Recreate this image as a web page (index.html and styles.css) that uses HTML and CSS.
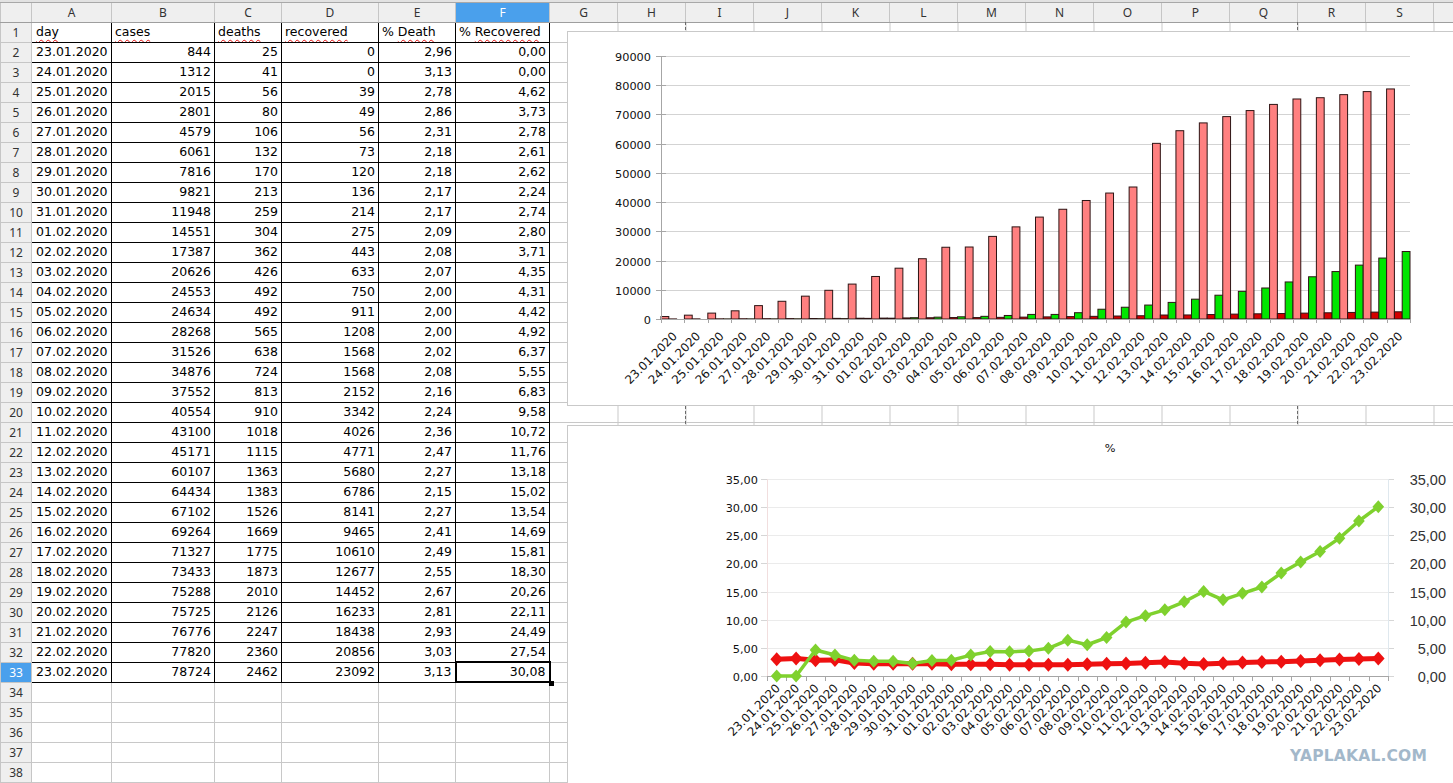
FILE: index.html
```html
<!DOCTYPE html>
<html>
  <head>
    <meta charset="utf-8" />
    <title>covid.ods</title>
    <link rel="stylesheet" href="styles.css">
  </head>
  <body>
    <div class="sheet">
      <div class="topstrip"></div>
      <table class="grid">
        <colgroup>
          <col class="c-rh"><col class="c-a"><col class="c-b"><col class="c-c"><col class="c-d"><col class="c-e"><col class="c-f">
          <col><col><col><col><col><col><col><col><col><col><col><col><col><col>
        </colgroup>
        <thead>
          <tr>
            <th></th><th>A</th><th>B</th><th>C</th><th>D</th><th>E</th><th class="sel">F</th>
            <th>G</th><th>H</th><th>I</th><th>J</th><th>K</th><th>L</th><th>M</th><th>N</th><th>O</th><th>P</th><th>Q</th><th>R</th><th>S</th><th></th>
          </tr>
        </thead>
        <tbody>
          <tr class="rec hd"><th>1</th><td><span class="sp">day</span></td><td><span class="sp">cases</span></td><td><span class="sp">deaths</span></td><td><span class="sp">recovered</span></td><td>% <span class="sp">Death</span></td><td>% <span class="sp">Recovered</span></td><td class="rest" colspan="14"></td></tr>
          <tr class="rec"><th>2</th><td>23.01.2020</td><td>844</td><td>25</td><td>0</td><td>2,96</td><td>0,00</td><td class="rest" colspan="14"></td></tr>
          <tr class="rec"><th>3</th><td>24.01.2020</td><td>1312</td><td>41</td><td>0</td><td>3,13</td><td>0,00</td><td class="rest" colspan="14"></td></tr>
          <tr class="rec"><th>4</th><td>25.01.2020</td><td>2015</td><td>56</td><td>39</td><td>2,78</td><td>4,62</td><td class="rest" colspan="14"></td></tr>
          <tr class="rec"><th>5</th><td>26.01.2020</td><td>2801</td><td>80</td><td>49</td><td>2,86</td><td>3,73</td><td class="rest" colspan="14"></td></tr>
          <tr class="rec"><th>6</th><td>27.01.2020</td><td>4579</td><td>106</td><td>56</td><td>2,31</td><td>2,78</td><td class="rest" colspan="14"></td></tr>
          <tr class="rec"><th>7</th><td>28.01.2020</td><td>6061</td><td>132</td><td>73</td><td>2,18</td><td>2,61</td><td class="rest" colspan="14"></td></tr>
          <tr class="rec"><th>8</th><td>29.01.2020</td><td>7816</td><td>170</td><td>120</td><td>2,18</td><td>2,62</td><td class="rest" colspan="14"></td></tr>
          <tr class="rec"><th>9</th><td>30.01.2020</td><td>9821</td><td>213</td><td>136</td><td>2,17</td><td>2,24</td><td class="rest" colspan="14"></td></tr>
          <tr class="rec"><th>10</th><td>31.01.2020</td><td>11948</td><td>259</td><td>214</td><td>2,17</td><td>2,74</td><td class="rest" colspan="14"></td></tr>
          <tr class="rec"><th>11</th><td>01.02.2020</td><td>14551</td><td>304</td><td>275</td><td>2,09</td><td>2,80</td><td class="rest" colspan="14"></td></tr>
          <tr class="rec"><th>12</th><td>02.02.2020</td><td>17387</td><td>362</td><td>443</td><td>2,08</td><td>3,71</td><td class="rest" colspan="14"></td></tr>
          <tr class="rec"><th>13</th><td>03.02.2020</td><td>20626</td><td>426</td><td>633</td><td>2,07</td><td>4,35</td><td class="rest" colspan="14"></td></tr>
          <tr class="rec"><th>14</th><td>04.02.2020</td><td>24553</td><td>492</td><td>750</td><td>2,00</td><td>4,31</td><td class="rest" colspan="14"></td></tr>
          <tr class="rec"><th>15</th><td>05.02.2020</td><td>24634</td><td>492</td><td>911</td><td>2,00</td><td>4,42</td><td class="rest" colspan="14"></td></tr>
          <tr class="rec"><th>16</th><td>06.02.2020</td><td>28268</td><td>565</td><td>1208</td><td>2,00</td><td>4,92</td><td class="rest" colspan="14"></td></tr>
          <tr class="rec"><th>17</th><td>07.02.2020</td><td>31526</td><td>638</td><td>1568</td><td>2,02</td><td>6,37</td><td class="rest" colspan="14"></td></tr>
          <tr class="rec"><th>18</th><td>08.02.2020</td><td>34876</td><td>724</td><td>1568</td><td>2,08</td><td>5,55</td><td class="rest" colspan="14"></td></tr>
          <tr class="rec"><th>19</th><td>09.02.2020</td><td>37552</td><td>813</td><td>2152</td><td>2,16</td><td>6,83</td><td class="rest" colspan="14"></td></tr>
          <tr class="rec"><th>20</th><td>10.02.2020</td><td>40554</td><td>910</td><td>3342</td><td>2,24</td><td>9,58</td><td class="rest" colspan="14"></td></tr>
          <tr class="rec"><th>21</th><td>11.02.2020</td><td>43100</td><td>1018</td><td>4026</td><td>2,36</td><td>10,72</td><td class="rest" colspan="14"></td></tr>
          <tr class="rec"><th>22</th><td>12.02.2020</td><td>45171</td><td>1115</td><td>4771</td><td>2,47</td><td>11,76</td><td class="rest" colspan="14"></td></tr>
          <tr class="rec"><th>23</th><td>13.02.2020</td><td>60107</td><td>1363</td><td>5680</td><td>2,27</td><td>13,18</td><td class="rest" colspan="14"></td></tr>
          <tr class="rec"><th>24</th><td>14.02.2020</td><td>64434</td><td>1383</td><td>6786</td><td>2,15</td><td>15,02</td><td class="rest" colspan="14"></td></tr>
          <tr class="rec"><th>25</th><td>15.02.2020</td><td>67102</td><td>1526</td><td>8141</td><td>2,27</td><td>13,54</td><td class="rest" colspan="14"></td></tr>
          <tr class="rec"><th>26</th><td>16.02.2020</td><td>69264</td><td>1669</td><td>9465</td><td>2,41</td><td>14,69</td><td class="rest" colspan="14"></td></tr>
          <tr class="rec"><th>27</th><td>17.02.2020</td><td>71327</td><td>1775</td><td>10610</td><td>2,49</td><td>15,81</td><td class="rest" colspan="14"></td></tr>
          <tr class="rec"><th>28</th><td>18.02.2020</td><td>73433</td><td>1873</td><td>12677</td><td>2,55</td><td>18,30</td><td class="rest" colspan="14"></td></tr>
          <tr class="rec"><th>29</th><td>19.02.2020</td><td>75288</td><td>2010</td><td>14452</td><td>2,67</td><td>20,26</td><td class="rest" colspan="14"></td></tr>
          <tr class="rec"><th>30</th><td>20.02.2020</td><td>75725</td><td>2126</td><td>16233</td><td>2,81</td><td>22,11</td><td class="rest" colspan="14"></td></tr>
          <tr class="rec"><th>31</th><td>21.02.2020</td><td>76776</td><td>2247</td><td>18438</td><td>2,93</td><td>24,49</td><td class="rest" colspan="14"></td></tr>
          <tr class="rec"><th>32</th><td>22.02.2020</td><td>77820</td><td>2360</td><td>20856</td><td>3,03</td><td>27,54</td><td class="rest" colspan="14"></td></tr>
          <tr class="rec"><th class="sel">33</th><td>23.02.2020</td><td>78724</td><td>2462</td><td>23092</td><td>3,13</td><td class="cur">30,08</td><td class="rest" colspan="14"></td></tr>
          <tr><th>34</th><td></td><td></td><td></td><td></td><td></td><td></td><td class="rest" colspan="14"></td></tr>
          <tr><th>35</th><td></td><td></td><td></td><td></td><td></td><td></td><td class="rest" colspan="14"></td></tr>
          <tr><th>36</th><td></td><td></td><td></td><td></td><td></td><td></td><td class="rest" colspan="14"></td></tr>
          <tr><th>37</th><td></td><td></td><td></td><td></td><td></td><td></td><td class="rest" colspan="14"></td></tr>
          <tr><th>38</th><td></td><td></td><td></td><td></td><td></td><td></td><td class="rest" colspan="14"></td></tr>
        </tbody>
      </table>

      <!-- разрывы страниц -->
      <div class="pb pb1"></div>
      <div class="pb pb2"></div>

      <div class="chart chart1">
        <svg id="bars" viewBox="568 32 890 373" width="890" height="373"></svg>
      </div>
      <div class="chart chart2">
        <svg id="lines" viewBox="568 426 890 360" width="890" height="360"></svg>
      </div>

      <div class="wm">YAPLAKAL.COM</div>
    </div>

    <script>
      const NS = "http://www.w3.org/2000/svg";
      function add(svg, tag, attrs, text) {
        const e = document.createElementNS(NS, tag);
        for (const k in attrs) e.setAttribute(k, attrs[k]);
        if (text !== undefined) e.textContent = text;
        svg.appendChild(e);
        return e;
      }
      const num = (s) => parseFloat(s.replace(",", "."));
      const px = (v) => Math.round(v) + 0.5;

      // данные берём прямо из таблицы
      const data = [...document.querySelectorAll(".grid tr.rec:not(.hd)")].map((tr) => {
        const c = tr.querySelectorAll("td");
        return {
          day: c[0].textContent,
          cases: num(c[1].textContent),
          deaths: num(c[2].textContent),
          rec: num(c[3].textContent),
          pd: num(c[4].textContent),
          pr: num(c[5].textContent),
        };
      });
      const n = data.length;

      // столбчатая диаграмма
      const bars = document.getElementById("bars");
      (function () {
        const left = 661, right = 1410, base = 319, top = 56;
        const cw = (right - left) / n;
        const k = (base - top) / 90000;
        for (let v = 0; v <= 90000; v += 10000) {
          const y = px(base - v * k);
          if (v) add(bars, "line", { x1: left, x2: right, y1: y, y2: y, class: "grid1" });
          add(bars, "line", { x1: 656, x2: 666, y1: y, y2: y, class: "axis" });
          add(bars, "text", { x: 651, y: y + 4, class: "lbl", "text-anchor": "end" }, v);
        }
        const bw = cw / 3;
        const series = [["cases", "#ff8080"], ["deaths", "#d40000"], ["rec", "#00e600"]];
        data.forEach((d, i) => {
          series.forEach(([key, color], j) => {
            const h = d[key] * k;
            add(bars, "rect", {
              x: left + i * cw + j * bw, y: base - h, width: bw, height: h,
              fill: color, class: "bar",
            });
          });
        });
        add(bars, "line", { x1: px(left), x2: px(left), y1: top, y2: base + 4, class: "axis" });
        add(bars, "line", { x1: left, x2: right, y1: px(base), y2: px(base), class: "axis" });
        for (let i = 0; i <= n; i++) {
          const x = px(left + i * cw);
          add(bars, "line", { x1: x, x2: x, y1: base, y2: base + 4, class: "axis" });
        }
        data.forEach((d, i) => {
          const x = left + (i + 0.5) * cw + 5, y = 337;
          add(bars, "text", { x, y, class: "xl", "text-anchor": "end", transform: `rotate(-45 ${x} ${y})` }, d.day);
        });
      })();

      // линейная диаграмма, %
      const lines = document.getElementById("lines");
      (function () {
        const left = 767, right = 1388, base = 676, top = 479;
        const cw = (right - left) / n;
        const k = (base - top) / 35;
        add(lines, "text", { x: 1110, y: 452, class: "lbl", "text-anchor": "middle" }, "%");
        for (let v = 0; v <= 35; v += 5) {
          const y = px(base - v * k);
          const t = v.toFixed(2).replace(".", ",");
          if (v) add(lines, "line", { x1: left, x2: right, y1: y, y2: y, class: "grid2" });
          add(lines, "line", { x1: left - 6, x2: left, y1: y, y2: y, class: "tick2" });
          add(lines, "line", { x1: right, x2: right + 6, y1: y, y2: y, class: "tick2" });
          add(lines, "text", { x: 758, y: y + 4, class: "lbl", "text-anchor": "end" }, t);
          add(lines, "text", { x: 1446, y: y + 5, class: "rl", "text-anchor": "end" }, t);
        }
        add(lines, "line", { x1: px(left), x2: px(left), y1: top, y2: base, class: "yl" });
        add(lines, "line", { x1: px(right), x2: px(right), y1: top, y2: base, class: "yr" });
        add(lines, "line", { x1: left, x2: right, y1: px(base), y2: px(base), class: "axis" });
        for (let i = 0; i <= n; i++) {
          const x = px(left + i * cw);
          add(lines, "line", { x1: x, x2: x, y1: base, y2: base + 5, class: "axis" });
        }
        const cx = (i) => left + (i + 0.5) * cw;
        const draw = (key, color, width, r) => {
          const pts = data.map((d, i) => cx(i) + "," + (base - d[key] * k)).join(" ");
          add(lines, "polyline", { points: pts, fill: "none", stroke: color, "stroke-width": width, "stroke-linejoin": "round" });
          data.forEach((d, i) => {
            const x = cx(i), y = base - d[key] * k;
            add(lines, "polygon", {
              points: `${x},${y - r} ${x + r * 0.9},${y} ${x},${y + r} ${x - r * 0.9},${y}`,
              fill: color,
            });
          });
        };
        draw("pd", "#ee1111", 5, 7);
        draw("pr", "#7fd12e", 3.5, 6.5);
        data.forEach((d, i) => {
          const x = cx(i) + 4, y = 689;
          add(lines, "text", { x, y, class: "xl", "text-anchor": "end", transform: `rotate(-45 ${x} ${y})` }, d.day);
        });
      })();
    </script>
  </body>
</html>
```

FILE: styles.css
```css
* {
  margin: 0;
  padding: 0;
  box-sizing: border-box;
}
html,
body {
  width: 100%;
  height: 100%;
  overflow: hidden;
  background: #fff;
}
.sheet {
  position: relative;
  width: 1453px;
  height: 783px;
  overflow: hidden;
  font-family: "DejaVu Sans", sans-serif;
}
.topstrip {
  height: 3px;
  background: #e2e2e2;
  border-bottom: 1px solid #a8a8a8;
}

/* таблица */
.grid {
  border-collapse: collapse;
  table-layout: fixed;
  width: 1501px;
}
.grid col {
  width: 68px;
}
.grid col.c-rh {
  width: 31px;
}
.grid col.c-a {
  width: 80px;
}
.grid col.c-b {
  width: 103px;
}
.grid col.c-c {
  width: 67px;
}
.grid col.c-d {
  width: 97px;
}
.grid col.c-e {
  width: 77px;
}
.grid col.c-f {
  width: 94px;
}
.grid th {
  background: #efefef;
  border: 1px solid #c6c6c6;
  font: 12px "Noto Sans", sans-serif;
  color: #333;
  text-align: center;
}
.grid thead th {
  height: 19px;
  line-height: 17px;
  border-top: 0;
  border-bottom-color: #9e9e9e;
}
.grid th.sel {
  background: #4aa0ec;
  color: #fff;
}
.grid tbody tr {
  height: 20px;
}
.grid td {
  border: 1px solid #c8c8c8;
  font-size: 12.5px;
  line-height: 18px;
  padding: 0 4px 0 4px;
  white-space: nowrap;
  overflow: hidden;
  color: #000;
}
.rec td {
  border-color: #000;
}
.rec td:not(:first-of-type) {
  text-align: right;
  padding-right: 3px;
}
.hd td:not(:first-of-type) {
  text-align: left;
  padding-left: 3px;
}
.grid td.rest {
  border-color: #c8c8c8;
  background: repeating-linear-gradient(to right, transparent 0 67px, #c8c8c8 67px 68px);
}
.grid td.cur {
  border: 2px solid #000;
  position: relative;
  overflow: visible;
}
.grid td.cur::after {
  content: "";
  position: absolute;
  right: -5px;
  bottom: -5px;
  width: 5px;
  height: 5px;
  background: #000;
}
.sp {
  text-decoration: underline wavy #e01010;
  text-decoration-thickness: 1px;
  text-underline-offset: 3px;
  text-decoration-skip-ink: none;
}

.pb {
  position: absolute;
  top: 22px;
  bottom: 0;
  width: 0;
  border-left: 1px dashed #6a6a6a;
}
.pb1 {
  left: 685px;
}
.pb2 {
  left: 1297px;
}

/* диаграммы */
.chart {
  position: absolute;
  background: #fff;
  outline: 1px solid #c9c9c9;
}
.chart svg {
  display: block;
}
.chart1 {
  left: 568px;
  top: 32px;
  width: 890px;
  height: 373px;
}
.chart2 {
  left: 568px;
  top: 426px;
  width: 890px;
  height: 360px;
}
.grid1 {
  stroke: #d3d3d3;
  stroke-width: 1;
}
.grid2 {
  stroke: #ebebeb;
  stroke-width: 1;
}
.axis {
  stroke: #a6a6a6;
  stroke-width: 1;
}
.tick2 {
  stroke: #d6d6d6;
  stroke-width: 1;
}
.yl {
  stroke: #f1dede;
}
.yr {
  stroke: #dfe8ee;
}
.bar {
  stroke: #2e1414;
  stroke-width: 1;
}
.lbl {
  font: 11.3px "DejaVu Sans", sans-serif;
  fill: #111;
}
.rl {
  font: 14.5px "Liberation Sans", sans-serif;
  fill: #333;
}
.xl {
  font: 11.8px "DejaVu Sans", sans-serif;
  fill: #111;
}

.wm {
  position: absolute;
  left: 1290px;
  top: 747px;
  font: bold 15.5px "DejaVu Sans", sans-serif;
  letter-spacing: 0.2px;
  color: #a3b8ca;
}
```
